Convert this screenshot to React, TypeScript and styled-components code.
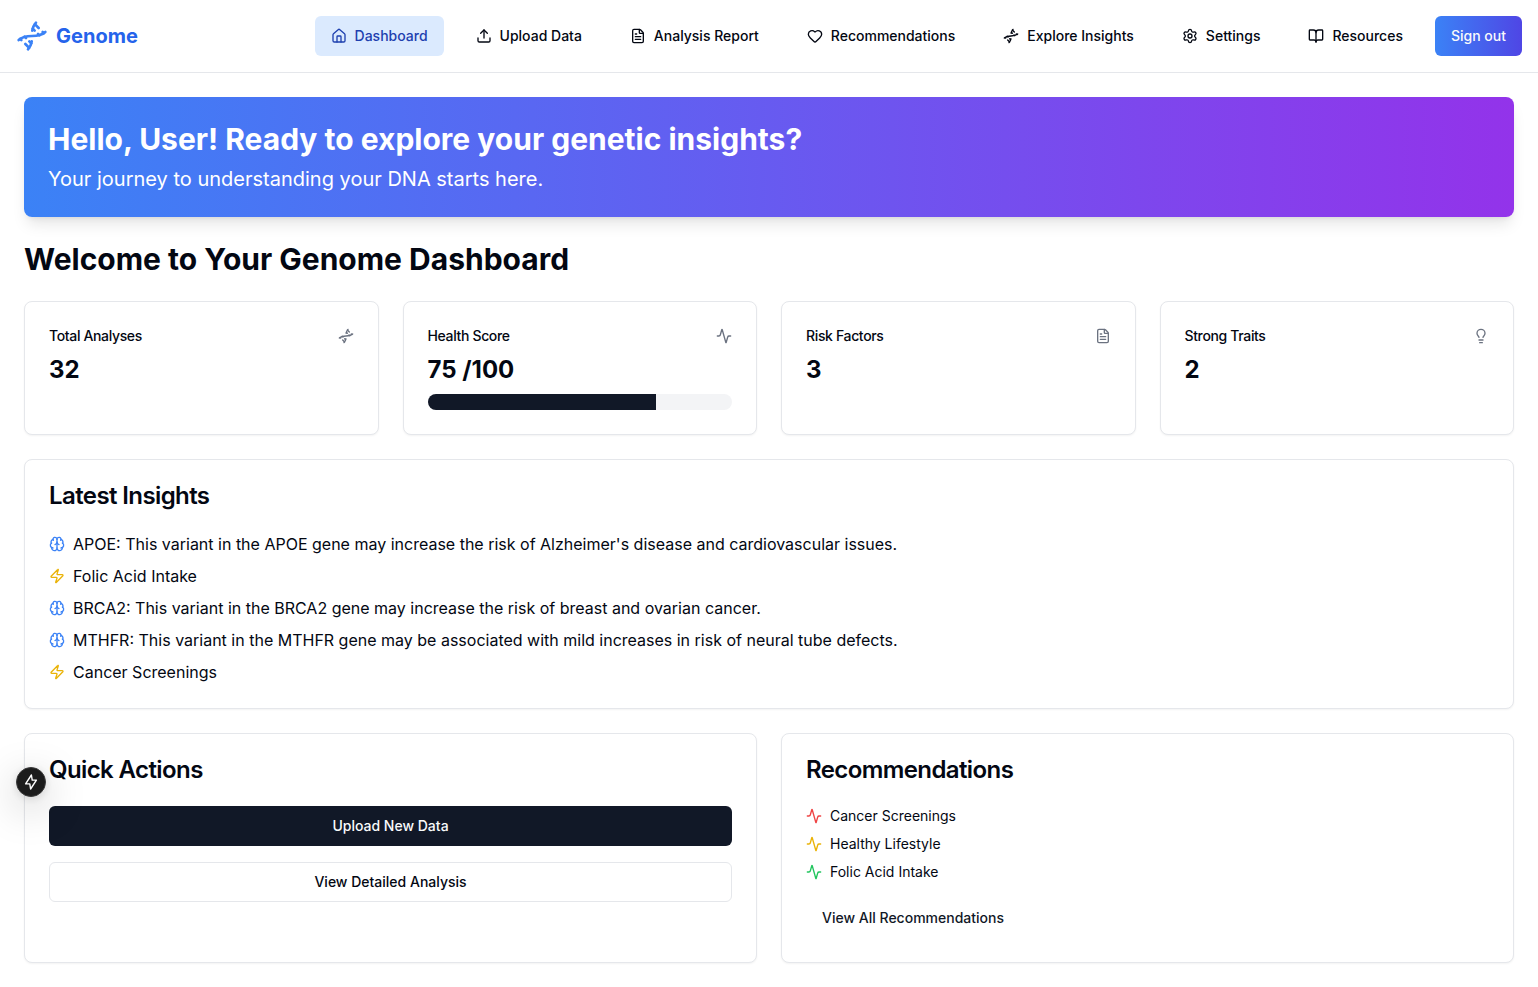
import React from "react";
import styled, { createGlobalStyle, css } from "styled-components";
import {
  Activity,
  BookOpen,
  Brain,
  Dna,
  FileText,
  Heart,
  House,
  Lightbulb,
  Settings,
  Upload,
  Zap,
  type LucideIcon,
} from "lucide-react";

const GlobalStyle = createGlobalStyle`
  *, *::before, *::after { box-sizing: border-box; }
  body {
    margin: 0;
    background: #ffffff;
    color: #030712;
    font-family: Inter, "Liberation Sans", sans-serif;
    font-size: 16px;
    line-height: 24px;
  }
  h1, h2, h3, p, ul { margin: 0; padding: 0; }
  ul { list-style: none; }
  a { color: inherit; text-decoration: none; }
  button { font-family: inherit; cursor: pointer; }
  svg { flex-shrink: 0; }
`;

const Header = styled.header`
  display: flex;
  align-items: center;
  justify-content: space-between;
  padding: 16px;
  border-bottom: 1px solid #e5e7eb;
`;

const Brand = styled.a`
  display: flex;
  align-items: center;
  gap: 8px;
  color: #2563eb;
  font-size: 20px;
  line-height: 28px;
  font-weight: 700;

  svg { color: #3b82f6; }
`;

const Nav = styled.nav`
  display: flex;
  align-items: center;
  gap: 16px;
`;

const controlStyle = css`
  display: inline-flex;
  align-items: center;
  justify-content: center;
  gap: 8px;
  height: 40px;
  padding: 0 16px;
  border: 0;
  border-radius: 6px;
  font-size: 14px;
  line-height: 20px;
  font-weight: 500;
  white-space: nowrap;
`;

const NavLink = styled.a<{ $active?: boolean }>`
  ${controlStyle}
  background: ${(p) => (p.$active ? "#dbeafe" : "transparent")};
  color: ${(p) => (p.$active ? "#1e40af" : "#030712")};
`;

const SignOutButton = styled.button`
  ${controlStyle}
  background: linear-gradient(to right, #3b82f6, #4f46e5);
  color: #f9fafb;
`;

const Main = styled.main`
  display: flex;
  flex-direction: column;
  gap: 24px;
  padding: 24px;
`;

const Hero = styled.section`
  display: flex;
  flex-direction: column;
  gap: 8px;
  padding: 24px;
  border-radius: 8px;
  background: linear-gradient(to right, #3b82f6, #9333ea);
  box-shadow: 0 10px 15px -3px rgba(0, 0, 0, 0.1), 0 4px 6px -4px rgba(0, 0, 0, 0.1);
  color: #ffffff;
`;

const HeroTitle = styled.h1`
  font-size: 30px;
  line-height: 36px;
  font-weight: 700;
`;

const HeroText = styled.p`
  font-size: 20px;
  line-height: 28px;
`;

const PageTitle = styled.h2`
  font-size: 30px;
  line-height: 36px;
  font-weight: 700;
`;

const Grid = styled.div<{ $columns: number }>`
  display: grid;
  grid-template-columns: repeat(${(p) => p.$columns}, minmax(0, 1fr));
  gap: 24px;
`;

const Card = styled.section`
  padding: 24px;
  border: 1px solid #e5e7eb;
  border-radius: 8px;
  background: #ffffff;
  box-shadow: 0 1px 2px rgba(0, 0, 0, 0.05);
`;

const StatHeader = styled.div`
  display: flex;
  align-items: center;
  justify-content: space-between;
  padding-bottom: 8px;

  svg { color: #6b7280; }
`;

const StatTitle = styled.h3`
  font-size: 14px;
  line-height: 20px;
  font-weight: 500;
  letter-spacing: -0.025em;
`;

const StatValue = styled.p`
  font-size: 24px;
  line-height: 32px;
  font-weight: 700;
`;

const Track = styled.div`
  height: 16px;
  margin-top: 8px;
  overflow: hidden;
  border-radius: 8px;
  background: #f3f4f6;
`;

const Fill = styled.div`
  height: 100%;
  background: #111827;
`;

const CardTitle = styled.h3`
  margin-bottom: 24px;
  font-size: 24px;
  line-height: 24px;
  font-weight: 600;
  letter-spacing: -0.025em;
`;

const List = styled.ul<{ $small?: boolean }>`
  display: flex;
  flex-direction: column;
  gap: 8px;
  font-size: ${(p) => (p.$small ? 14 : 16)}px;
  line-height: ${(p) => (p.$small ? 20 : 24)}px;
`;

const Item = styled.li<{ $tone: string }>`
  display: flex;
  align-items: center;
  gap: 8px;

  svg { color: ${(p) => p.$tone}; }
`;

const Actions = styled.div`
  display: flex;
  flex-direction: column;
  gap: 16px;
`;

const PrimaryButton = styled.button`
  ${controlStyle}
  background: #111827;
  color: #f9fafb;
`;

const OutlineButton = styled.button`
  ${controlStyle}
  border: 1px solid #e5e7eb;
  background: #ffffff;
  color: #030712;
`;

const TextButton = styled.button`
  ${controlStyle}
  margin-top: 16px;
  background: transparent;
  color: #111827;
`;

const DevBadge = styled.button`
  position: fixed;
  left: 16px;
  bottom: 190px;
  display: flex;
  align-items: center;
  justify-content: center;
  width: 30px;
  height: 30px;
  padding: 0;
  border: 1px solid #3a3a3a;
  border-radius: 50%;
  background: #1c1c1c;
  box-shadow: 0 11px 40px rgba(0, 0, 0, 0.25), 0 2px 10px rgba(0, 0, 0, 0.12);
  color: #ffffff;
`;

const navItems: { label: string; icon: LucideIcon; active?: boolean }[] = [
  { label: "Dashboard", icon: House, active: true },
  { label: "Upload Data", icon: Upload },
  { label: "Analysis Report", icon: FileText },
  { label: "Recommendations", icon: Heart },
  { label: "Explore Insights", icon: Dna },
  { label: "Settings", icon: Settings },
  { label: "Resources", icon: BookOpen },
];

const stats: { label: string; value: string; icon: LucideIcon; progress?: number }[] = [
  { label: "Total Analyses", value: "32", icon: Dna },
  { label: "Health Score", value: "75 /100", icon: Activity, progress: 75 },
  { label: "Risk Factors", value: "3", icon: FileText },
  { label: "Strong Traits", value: "2", icon: Lightbulb },
];

const insights: { text: string; kind: "gene" | "action" }[] = [
  {
    text: "APOE: This variant in the APOE gene may increase the risk of Alzheimer's disease and cardiovascular issues.",
    kind: "gene",
  },
  { text: "Folic Acid Intake", kind: "action" },
  {
    text: "BRCA2: This variant in the BRCA2 gene may increase the risk of breast and ovarian cancer.",
    kind: "gene",
  },
  {
    text: "MTHFR: This variant in the MTHFR gene may be associated with mild increases in risk of neural tube defects.",
    kind: "gene",
  },
  { text: "Cancer Screenings", kind: "action" },
];

const recommendations = [
  { text: "Cancer Screenings", tone: "#ef4444" },
  { text: "Healthy Lifestyle", tone: "#eab308" },
  { text: "Folic Acid Intake", tone: "#22c55e" },
];

export default function App() {
  return (
    <>
      <GlobalStyle />
      <Header>
        <Brand href="#">
          <Dna size={32} />
          Genome
        </Brand>
        <Nav>
          {navItems.map(({ label, icon: Icon, active }) => (
            <NavLink key={label} href="#" $active={active} aria-current={active ? "page" : undefined}>
              <Icon size={16} />
              {label}
            </NavLink>
          ))}
          <SignOutButton type="button">Sign out</SignOutButton>
        </Nav>
      </Header>

      <Main>
        <Hero>
          <HeroTitle>Hello, User! Ready to explore your genetic insights?</HeroTitle>
          <HeroText>Your journey to understanding your DNA starts here.</HeroText>
        </Hero>

        <PageTitle>Welcome to Your Genome Dashboard</PageTitle>

        <Grid $columns={4}>
          {stats.map(({ label, value, icon: Icon, progress }) => (
            <Card key={label}>
              <StatHeader>
                <StatTitle>{label}</StatTitle>
                <Icon size={16} />
              </StatHeader>
              <StatValue>{value}</StatValue>
              {progress !== undefined && (
                <Track role="progressbar" aria-label={label} aria-valuenow={progress} aria-valuemin={0} aria-valuemax={100}>
                  <Fill style={{ width: `${progress}%` }} />
                </Track>
              )}
            </Card>
          ))}
        </Grid>

        <Card>
          <CardTitle>Latest Insights</CardTitle>
          <List>
            {insights.map(({ text, kind }) => (
              <Item key={text} $tone={kind === "gene" ? "#3b82f6" : "#eab308"}>
                {kind === "gene" ? <Brain size={16} /> : <Zap size={16} />}
                {text}
              </Item>
            ))}
          </List>
        </Card>

        <Grid $columns={2}>
          <Card>
            <CardTitle>Quick Actions</CardTitle>
            <Actions>
              <PrimaryButton type="button">Upload New Data</PrimaryButton>
              <OutlineButton type="button">View Detailed Analysis</OutlineButton>
            </Actions>
          </Card>
          <Card>
            <CardTitle>Recommendations</CardTitle>
            <List $small>
              {recommendations.map(({ text, tone }) => (
                <Item key={text} $tone={tone}>
                  <Activity size={16} />
                  {text}
                </Item>
              ))}
            </List>
            <TextButton type="button">View All Recommendations</TextButton>
          </Card>
        </Grid>
      </Main>

      <DevBadge type="button" aria-label="Open developer tools">
        <svg width="16" height="16" viewBox="0 0 16 16" fill="none">
          <path
            d="M8.4 1 2.6 9.9H6.8L7.6 15 13.4 6.1H9.2Z"
            stroke="currentColor"
            strokeWidth="1.4"
            strokeLinejoin="round"
          />
        </svg>
      </DevBadge>
    </>
  );
}
